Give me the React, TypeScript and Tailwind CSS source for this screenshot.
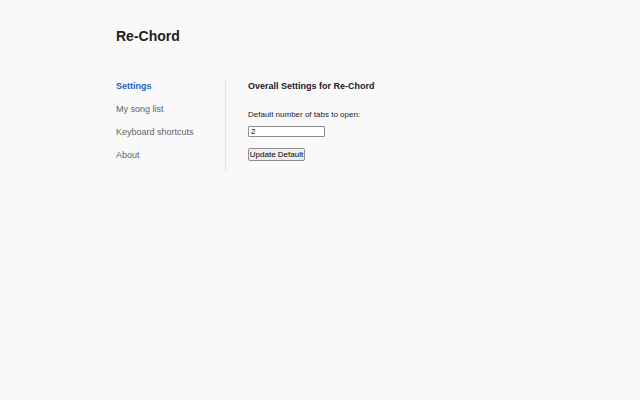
import React from "react";

export default function App() {
  return (
    <div
      className="min-h-screen w-full bg-[#f9f9f9] text-[#202124]"
      style={{ fontFamily: '"Liberation Sans", Arial, sans-serif' }}
    >
      <div className="pl-[116px] pt-[28px]">
        <h1 className="text-[14px] leading-[16px] font-bold text-[#202124]">Re-Chord</h1>
        <div className="mt-[36px] flex">
          <nav className="flex w-[109px] flex-col gap-[11px]">
            <a className="text-[9px] leading-[12px] font-bold text-[#1a5fc8]">Settings</a>
            <a className="text-[9px] leading-[12px] text-[#5f6368]">My song list</a>
            <a className="text-[9px] leading-[12px] text-[#5f6368]">Keyboard shortcuts</a>
            <a className="text-[9px] leading-[12px] text-[#5f6368]">About</a>
          </nav>
          <div className="h-[91px] border-l border-[#e3e3e3] pl-[22px]">
            <h2 className="text-[9px] leading-[12px] font-bold text-[#202124]">
              Overall Settings for Re-Chord
            </h2>
            <label className="mt-[18px] block text-[8px] leading-[10px] text-[#202124]">
              Default number of tabs to open:
            </label>
            <input
              defaultValue="2"
              className="mt-[6px] block h-[11px] w-[77px] rounded-[1px] border border-[#8f8f8f] bg-white px-[2px] text-[8px] leading-[9px] text-black outline-none"
            />
            <button className="mt-[11px] block h-[13px] w-[57px] rounded-[2px] border border-[#8f8f8f] bg-[#efefef] p-0 text-[8px] leading-[10px] text-black">
              Update Default
            </button>
          </div>
        </div>
      </div>
    </div>
  );
}
